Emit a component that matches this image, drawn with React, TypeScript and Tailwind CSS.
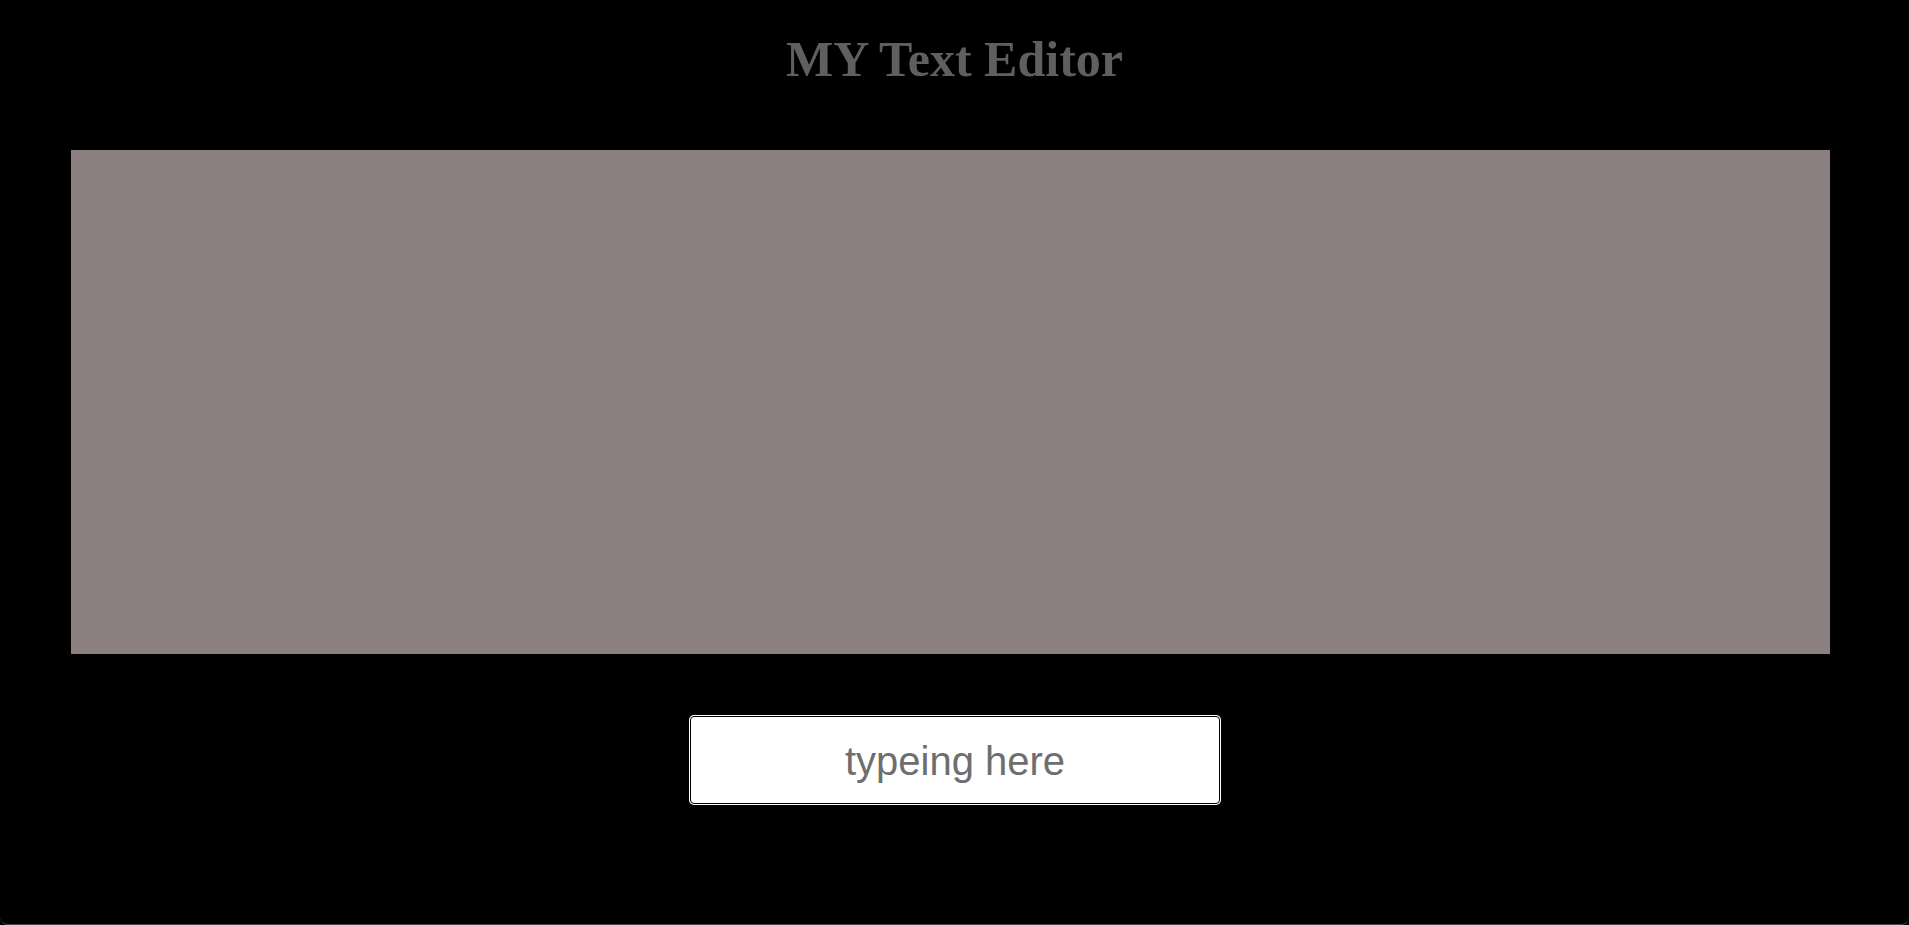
import React from "react";

export default function App() {
  return (
    <div className="bg-black w-full h-[925px]">
      <div className="h-[925px] bg-black border-b border-[#4a4a4a] rounded-b-[8px] flex flex-col">
        <h1
          className="mt-[34px] h-[50px] leading-[50px] text-center text-[50px] font-bold text-[#5f5f5f]"
          style={{ fontFamily: '"Liberation Serif", "Times New Roman", serif' }}
        >
          MY Text Editor
        </h1>
        <div className="mt-[66px] ml-[71px] w-[1759px] h-[504px] bg-[#8b7f7f]" />
        <div className="mt-[62px] flex pl-[690px]">
          <input
            type="text"
            placeholder="typeing here"
            className="w-[530px] h-[88px] pt-[2px] bg-white border border-black rounded-[4px] ring-1 ring-white text-center text-[40px] text-[#6b6b6b] placeholder:text-[#6e6e6e] outline-none"
            style={{ fontFamily: '"Liberation Sans", Arial, sans-serif' }}
          />
        </div>
      </div>
    </div>
  );
}
